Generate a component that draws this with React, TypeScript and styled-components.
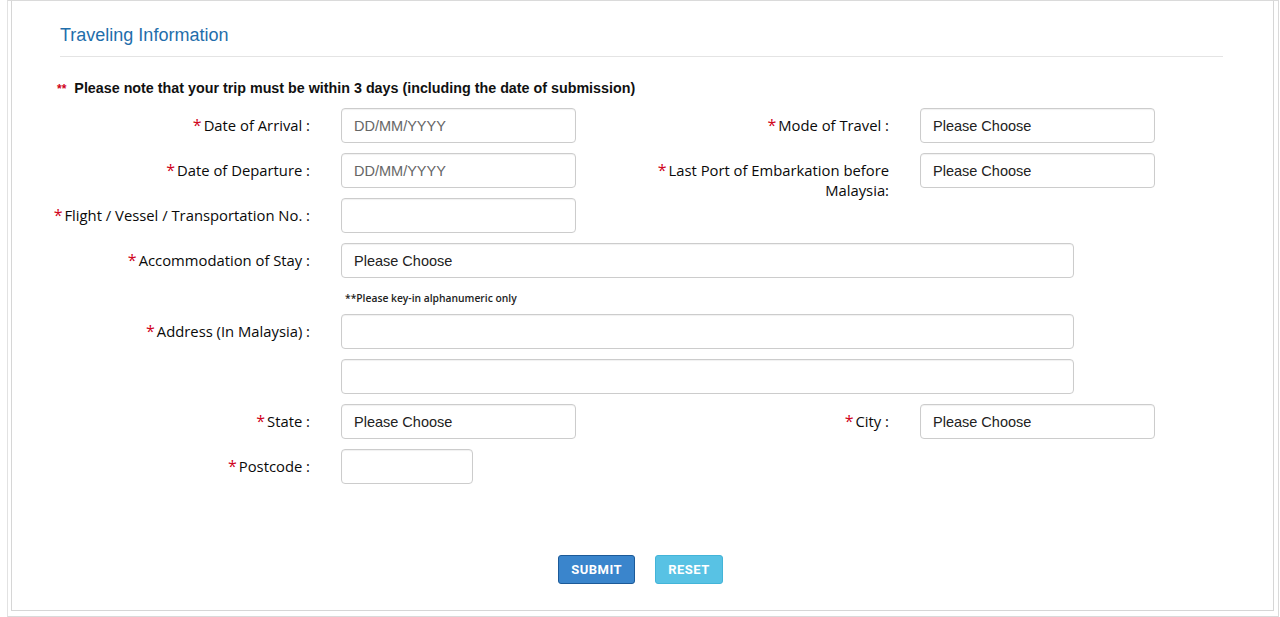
import styled, { createGlobalStyle } from "styled-components";

const GlobalStyle = createGlobalStyle`
  html, body {
    margin: 0;
    padding: 0;
    background: #ffffff;
  }
  * {
    box-sizing: border-box;
  }
`;

const Frame = styled.div`
  margin-left: 7px;
  width: 1272px;
  height: 617px;
  border: 1px solid #dadada;
  border-left-color: #e2e2e2;
  padding: 0 4px 5px 3px;
`;

const Panel = styled.div`
  height: 100%;
  border: 1px solid #d6d6d6;
  border-top: none;
  padding: 0 50px 0 48px;
  display: flex;
  flex-direction: column;
`;

const Heading = styled.div`
  padding-top: 24px;
  padding-bottom: 11px;
  border-bottom: 1px solid #e4e4e4;
`;

const Title = styled.h2`
  margin: 0;
  font-family: "Liberation Sans", Arial, sans-serif;
  font-weight: normal;
  font-size: 18px;
  line-height: 20px;
  color: #1f6eab;
`;

const Note = styled.p`
  margin: 22px 0 10px -3px;
  font-family: "Liberation Sans", Arial, sans-serif;
  font-weight: bold;
  font-size: 14.3px;
  line-height: 18px;
  color: #111;
  span {
    color: #d0021b;
    font-size: 12px;
    margin-right: 8px;
  }
`;

const FormGrid = styled.div`
  display: grid;
  grid-template-columns: 250px 235px 282px 235px;
  grid-template-rows: repeat(4, 35px) 16px repeat(4, 35px);
  column-gap: 31px;
  row-gap: 10px;
`;

const Label = styled.label<{ $col?: number }>`
  grid-column: ${(p) => p.$col ?? 1};
  display: flex;
  justify-content: flex-end;
  align-items: baseline;
  padding-top: 7px;
  font-family: "Open Sans", sans-serif;
  font-size: 14.8px;
  line-height: 20px;
  color: #0a0a0a;
  text-align: right;
  white-space: nowrap;
  b {
    color: #d0021b;
    font-weight: normal;
    font-size: 16px;
    line-height: 20px;
    margin-right: 2px;
  }
`;

const Input = styled.input<{ $col?: number; $width?: number }>`
  grid-column: ${(p) => p.$col ?? 2} / span ${(p) => (p.$width ? 3 : 1)};
  width: ${(p) => (p.$width ? `${p.$width}px` : "100%")};
  height: 35px;
  padding: 0 12px;
  border: 1px solid #cccccc;
  border-radius: 4px;
  box-shadow: inset 0 1px 1px rgba(0, 0, 0, 0.06);
  font-family: "Liberation Sans", Arial, sans-serif;
  font-size: 14.5px;
  color: #333;
  background: #fff;
  outline: none;
  &::placeholder {
    color: #666;
  }
`;

const Select = styled.div<{ $col?: number; $width?: number }>`
  grid-column: ${(p) => p.$col ?? 2} / span ${(p) => (p.$width ? 3 : 1)};
  width: ${(p) => (p.$width ? `${p.$width}px` : "100%")};
  height: 35px;
  display: flex;
  align-items: center;
  padding: 0 12px;
  border: 1px solid #cccccc;
  border-radius: 4px;
  box-shadow: inset 0 1px 1px rgba(0, 0, 0, 0.06);
  font-family: "Liberation Sans", Arial, sans-serif;
  font-size: 14.5px;
  color: #222;
  background: #fff;
`;

const Hint = styled.div`
  grid-column: 2 / span 3;
  align-self: end;
  padding-left: 4px;
  font-family: "Open Sans", sans-serif;
  font-weight: 600;
  font-size: 10.3px;
  line-height: 12px;
  color: #222;
`;

const Actions = styled.div`
  display: flex;
  justify-content: center;
  gap: 20px;
  margin-top: 71px;
  padding-right: 2px;
`;

const Button = styled.button<{ $variant: "primary" | "info" }>`
  height: 29px;
  padding: 0 12px;
  border-radius: 3px;
  border: 1px solid
    ${(p) => (p.$variant === "primary" ? "#1c5a98" : "#43b4d8")};
  background: ${(p) => (p.$variant === "primary" ? "#3a85cc" : "#58c2e4")};
  color: #fff;
  font-family: Roboto, "Liberation Sans", sans-serif;
  font-weight: bold;
  font-size: 13px;
  letter-spacing: 0.5px;
  cursor: pointer;
`;

function Req({ children }: { children: React.ReactNode }) {
  return (
    <>
      <b>*</b>
      <span>{children}</span>
    </>
  );
}

export default function App() {
  return (
    <>
      <GlobalStyle />
      <Frame>
        <Panel>
          <Heading>
            <Title>Traveling Information</Title>
          </Heading>
          <Note>
            <span>**</span>Please note that your trip must be within 3 days
            (including the date of submission)
          </Note>
          <FormGrid>
            <Label>
              <Req>Date of Arrival :</Req>
            </Label>
            <Input placeholder="DD/MM/YYYY" />
            <Label $col={3}>
              <Req>Mode of Travel :</Req>
            </Label>
            <Select $col={4}>Please Choose</Select>

            <Label>
              <Req>Date of Departure :</Req>
            </Label>
            <Input placeholder="DD/MM/YYYY" />
            <Label $col={3}>
              <Req>
                Last Port of Embarkation before
                <br />
                Malaysia:
              </Req>
            </Label>
            <Select $col={4}>Please Choose</Select>

            <Label>
              <Req>Flight / Vessel / Transportation No. :</Req>
            </Label>
            <Input />

            <Label>
              <Req>Accommodation of Stay :</Req>
            </Label>
            <Select $width={733}>Please Choose</Select>

            <Hint>**Please key-in alphanumeric only</Hint>

            <Label>
              <Req>Address (In Malaysia) :</Req>
            </Label>
            <Input $width={733} />

            <Input $width={733} />

            <Label>
              <Req>State :</Req>
            </Label>
            <Select>Please Choose</Select>
            <Label $col={3}>
              <Req>City :</Req>
            </Label>
            <Select $col={4}>Please Choose</Select>

            <Label>
              <Req>Postcode :</Req>
            </Label>
            <Input $width={132} style={{ gridColumn: "2" }} />
          </FormGrid>
          <Actions>
            <Button $variant="primary">SUBMIT</Button>
            <Button $variant="info">RESET</Button>
          </Actions>
        </Panel>
      </Frame>
    </>
  );
}
